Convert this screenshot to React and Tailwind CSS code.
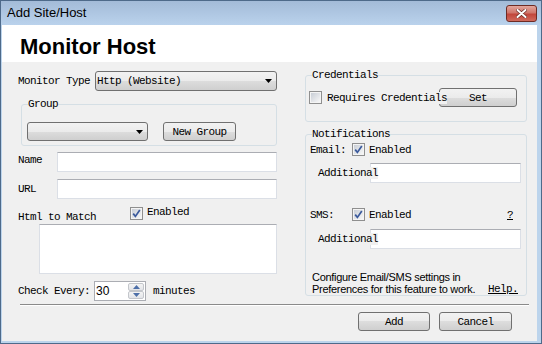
import React from 'react';

const mono = "font-['Liberation_Mono',monospace] text-[11px] leading-[12px] tracking-[-0.6px] text-black whitespace-nowrap";
const btnBg = 'bg-[linear-gradient(#f2f2f2,#ebebeb_50%,#dddddd_50%,#cfcfcf)]';

const Check = ({ checked }) => (
  <span className="flex h-[13px] w-[13px] shrink-0 items-center justify-center border border-[#8f8f8f] bg-white">
    <span className="flex h-[11px] w-[11px] items-center justify-center border border-[#f4f4f4] bg-linear-to-br from-[#c9ced6] to-[#f7f7f7]">
      {checked && (
        <svg width="9" height="9" viewBox="0 0 9 9">
          <path d="M1.2 4.6 L3.4 7.4 L7.8 1" stroke="#3b5a9c" strokeWidth="1.7" fill="none" />
        </svg>
      )}
    </span>
  </span>
);

const Arrow = () => (
  <svg width="7" height="4" viewBox="0 0 7 4">
    <path d="M0 0H7L3.5 4Z" fill="#000" />
  </svg>
);

const Combo = ({ className, children }) => (
  <div className={`flex items-center justify-between rounded-[3px] border border-[#707070] ${btnBg} pl-[1px] pr-[4px] ${className}`}>
    <span className={mono}>{children}</span>
    <Arrow />
  </div>
);

const Button = ({ className, children }) => (
  <div className={`flex items-center justify-center rounded-[3px] border border-[#707070] ${btnBg} ${mono} ${className}`}>
    {children}
  </div>
);

const Input = ({ className }) => (
  <div className={`border border-[#dbdfe6] border-t-[#abadb3] bg-white ${className}`} />
);

const SpinBtn = ({ up }) => (
  <div className="flex flex-1 items-center justify-center rounded-[2px] border border-[#c3c6cb] bg-linear-to-b from-[#f4f4f4] to-[#e2e4e8]">
    <svg width="7" height="4" viewBox="0 0 7 4">
      <path d={up ? 'M0 4H7L3.5 0Z' : 'M0 0H7L3.5 4Z'} fill="#4d6fa8" />
    </svg>
  </div>
);

const GroupBox = ({ label, className, children }) => (
  <div className={`relative rounded-[3px] border border-[#d5dfe5] ${className}`}>
    <span className={`absolute -top-[7px] left-[6px] bg-[#f0f0f0] ${mono}`}>{label}</span>
    {children}
  </div>
);

export default function App() {
  return (
    <div className="flex h-[344px] w-[542px] flex-col border border-[#4e6a8a] bg-[#bcd4ec]">
      {/* title bar */}
      <div className="flex h-[24px] items-start justify-between bg-linear-to-b from-[#a3bbd8] to-[#bad2ec] pl-[6px] pr-[4px]">
        <span className="pt-[4px] font-['Liberation_Sans',sans-serif] text-[13px] leading-[16px] text-black">Add Site/Host</span>
        <div className="mt-[4px] flex h-[17px] w-[31px] items-center justify-center rounded-[3px] border border-[#6e2b24] bg-[linear-gradient(#e3a69d,#d0766b_45%,#c2463b_55%,#d06a5c)]">
          <svg width="11" height="9" viewBox="0 0 11 9">
            <path d="M1.5 1 L9.5 8 M9.5 1 L1.5 8" stroke="#6b2a24" strokeWidth="3.4" strokeLinecap="round" />
            <path d="M1.5 1 L9.5 8 M9.5 1 L1.5 8" stroke="#fff" strokeWidth="2" strokeLinecap="round" />
          </svg>
        </div>
      </div>

      <div className="mb-[2px] ml-[1px] mr-[4px] flex flex-1 flex-col bg-[#f0f0f0]">
        {/* header */}
        <div className="h-[37px] bg-white pl-[18px] pt-[9px]">
          <h1 className="font-['Liberation_Sans',sans-serif] text-[22px] font-bold leading-[26px] text-black">Monitor Host</h1>
        </div>

        <div className="flex items-start pl-[16px]">
          {/* left column */}
          <div className="flex w-[259px] flex-col">
            <div className="mt-[9px] flex h-[20px] items-center justify-between">
              <span className={mono}>Monitor Type</span>
              <Combo className="h-[20px] w-[182px]">Http (Website)</Combo>
            </div>

            <GroupBox label="Group" className="ml-[3px] mt-[13px] h-[42px] w-[256px]">
              <div className="flex items-center pl-[5px] pt-[17px]">
                <Combo className="h-[19px] w-[121px]" />
                <Button className="ml-[15px] h-[19px] w-[73px]">New Group</Button>
              </div>
            </GroupBox>

            <div className="mt-[6px] flex items-start justify-between">
              <span className={`mt-[2px] ${mono}`}>Name</span>
              <Input className="h-[20px] w-[220px]" />
            </div>
            <div className="mt-[7px] flex items-center justify-between">
              <span className={mono}>URL</span>
              <Input className="h-[20px] w-[220px]" />
            </div>

            <div className="mt-[8px] flex h-[13px] items-start">
              <span className={`mt-[4px] w-[112px] ${mono}`}>Html to Match</span>
              <Check checked />
              <span className={`ml-[4px] -mt-[1px] ${mono}`}>Enabled</span>
            </div>
            <Input className="ml-[21px] mt-[4px] h-[50px] w-[238px]" />

            <div className="mt-[7px] flex h-[20px] items-center">
              <span className={mono}>Check Every:</span>
              <div className="ml-[4px] flex h-[20px] w-[52px] border border-[#abadb3] bg-white">
                <span className="flex-1 pl-[1px] font-['Liberation_Sans',sans-serif] text-[12px] leading-[18px] text-black">30</span>
                <div className="my-[1px] mr-[1px] flex w-[16px] flex-col">
                  <SpinBtn up />
                  <SpinBtn />
                </div>
              </div>
              <span className={`ml-[7px] ${mono}`}>minutes</span>
            </div>
          </div>

          {/* right column */}
          <div className="ml-[28px] flex w-[222px] flex-col">
            <GroupBox label="Credentials" className="mt-[13px] h-[47px]">
              <div className="flex h-[19px] items-center pl-[3px] mt-[12px]">
                <Check />
                <span className={`relative z-10 ml-[5px] bg-[#f0f0f0] ${mono}`}>Requires Credentials</span>
                <Button className="-ml-[8px] h-[19px] w-[78px]">Set</Button>
              </div>
            </GroupBox>

            <GroupBox label="Notifications" className="mt-[12px] h-[162px]">
              <div className="flex flex-col pl-[4px] pr-[5px]">
                <div className="mt-[8px] flex h-[13px] items-center">
                  <span className={`w-[42px] ${mono}`}>Email:</span>
                  <Check checked />
                  <span className={`ml-[4px] ${mono}`}>Enabled</span>
                </div>
                <div className="mt-[7px] flex h-[20px] items-center pl-[8px]">
                  <span className={`relative z-10 bg-[#f0f0f0] ${mono}`}>Additional</span>
                  <Input className="-ml-[8px] h-[20px] w-[151px]" />
                </div>

                <div className="mt-[25px] flex h-[13px] items-center">
                  <span className={`w-[42px] ${mono}`}>SMS:</span>
                  <Check checked />
                  <span className={`ml-[4px] ${mono}`}>Enabled</span>
                  <span className={`ml-auto mr-[8px] text-[#0000ff] underline ${mono}`}>?</span>
                </div>
                <div className="mt-[8px] flex h-[20px] items-center pl-[8px]">
                  <span className={`relative z-10 bg-[#f0f0f0] ${mono}`}>Additional</span>
                  <Input className="-ml-[8px] h-[20px] w-[151px]" />
                </div>

                <div className="mt-[22px] flex items-end justify-between pl-[2px] pr-[3px]">
                  <p className="font-['Liberation_Sans',sans-serif] text-[11px] leading-[12px] tracking-[-0.3px] text-black">
                    Configure Email/SMS settings in
                    <br />
                    Preferences for this feature to work.
                  </p>
                  <span className={`text-[#0000ff] underline ${mono}`}>Help.</span>
                </div>
              </div>
            </GroupBox>
          </div>
        </div>

        {/* separator */}
        <div className="ml-[18px] mr-[8px] mt-[3px] h-[2px] border-t border-[#8a8a8a] bg-white" />

        <div className="mt-[6px] flex justify-end gap-[9px] pr-[25px]">
          <Button className="h-[19px] w-[72px]">Add</Button>
          <Button className="h-[19px] w-[73px]">Cancel</Button>
        </div>
      </div>
    </div>
  );
}
